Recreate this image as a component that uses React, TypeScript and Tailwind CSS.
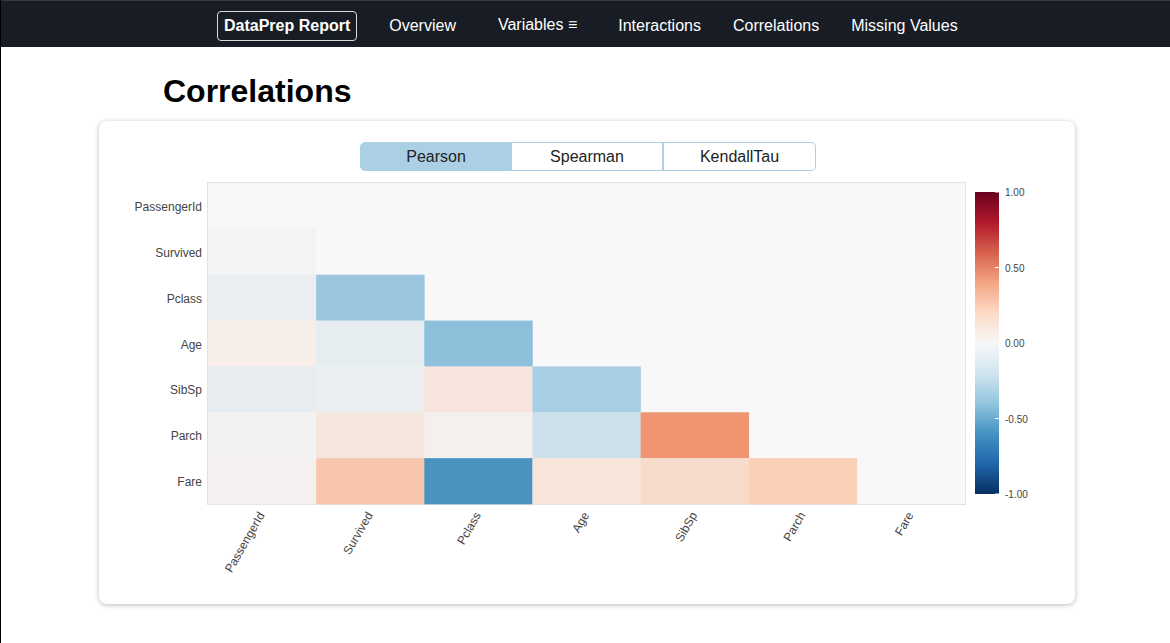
import React from "react";

const labels = ["PassengerId", "Survived", "Pclass", "Age", "SibSp", "Parch", "Fare"];

const cells: [number, number, string][] = [
  [1, 0, "#f3f3f3"],
  [2, 0, "#eaeef1"], [2, 1, "#9ac6df"],
  [3, 0, "#f7eeea"], [3, 1, "#e6edf1"], [3, 2, "#8ec0db"],
  [4, 0, "#e7ecf0"], [4, 1, "#ebeff1"], [4, 2, "#f7e4dc"], [4, 3, "#a8cfe3"],
  [5, 0, "#f2f2f2"], [5, 1, "#f7e6de"], [5, 2, "#f4f0ed"], [5, 3, "#cce1ec"], [5, 4, "#ef9572"],
  [6, 0, "#f5f1f1"], [6, 1, "#f8c6ac"], [6, 2, "#4a93c1"], [6, 3, "#f7e5da"], [6, 4, "#f7dccc"], [6, 5, "#fbd0b8"],
];

const PX = 109;
const PY = 12;
const PW = 757;
const PH = 321;
const CW = PW / 7;
const RH = PH / 7;

function Heatmap() {
  const cbTop = 21;
  const cbBot = 323;
  const ticks = [
    { v: "1.00", y: cbTop },
    { v: "0.50", y: cbTop + (cbBot - cbTop) * 0.25 },
    { v: "0.00", y: cbTop + (cbBot - cbTop) * 0.5 },
    { v: "-0.50", y: cbTop + (cbBot - cbTop) * 0.75 },
    { v: "-1.00", y: cbBot },
  ];
  return (
    <svg width={976} height={433} className="block" style={{ fontFamily: '"Liberation Sans", Arial, sans-serif' }}>
      <defs>
        <linearGradient id="rdbu" x1="0" y1="0" x2="0" y2="1">
          <stop offset="0" stopColor="#67001f" />
          <stop offset="0.1" stopColor="#b2182b" />
          <stop offset="0.2" stopColor="#d6604d" />
          <stop offset="0.3" stopColor="#f4a582" />
          <stop offset="0.4" stopColor="#fddbc7" />
          <stop offset="0.5" stopColor="#f7f7f7" />
          <stop offset="0.6" stopColor="#d1e5f0" />
          <stop offset="0.7" stopColor="#92c5de" />
          <stop offset="0.8" stopColor="#4393c3" />
          <stop offset="0.9" stopColor="#2166ac" />
          <stop offset="1" stopColor="#053061" />
        </linearGradient>
      </defs>
      <rect x={PX - 0.5} y={PY - 0.5} width={PW + 1} height={PH + 1} fill="#f8f8f8" stroke="#e2e2e2" strokeWidth={1} />
      {cells.map(([r, c, col]) => (
        <rect key={`${r}-${c}`} x={PX + c * CW} y={PY + r * RH} width={CW + 0.3} height={RH + 0.3} fill={col} />
      ))}
      {labels.map((l, i) => (
        <text key={l} x={103} y={PY + (i + 0.5) * RH + 5} textAnchor="end" fontSize={12} fill="#444">
          {l}
        </text>
      ))}
      {labels.map((l, i) => {
        const cx = PX + (i + 0.5) * CW + 3;
        return (
          <text key={"x" + l} transform={`translate(${cx},${344}) rotate(-60)`} textAnchor="end" fontSize={12} fill="#444">
            {l}
          </text>
        );
      })}
      <rect x={876} y={cbTop} width={24} height={cbBot - cbTop} fill="url(#rdbu)" />
      {ticks.map((t) => (
        <g key={t.v}>
          <line x1={896} x2={900} y1={t.y} y2={t.y} stroke="#fff" strokeWidth={1} />
          <text x={906} y={t.y + 4} fontSize={10} fill="#444">
            {t.v}
          </text>
        </g>
      ))}
    </svg>
  );
}

export default function App() {
  return (
    <div
      className="min-h-[643px] bg-white border-l border-black"
      style={{ fontFamily: '"Liberation Sans", Arial, Helvetica, sans-serif' }}
    >
      <nav className="h-[47px] bg-[#181d25] border-t border-[#3a3a3a] flex items-center pt-[3px] pl-[216px] text-white text-[16px]">
        <span className="border border-[#d8d8d8] rounded-[4px] px-[6px] h-[30px] flex items-center font-bold">
          DataPrep Report
        </span>
        <span className="ml-[32px]">Overview</span>
        <span className="ml-[42px] -mt-[2px]">Variables ≡</span>
        <span className="ml-[41px]">Interactions</span>
        <span className="ml-[32px]">Correlations</span>
        <span className="ml-[32px]">Missing Values</span>
      </nav>
      <h1 className="ml-[162px] mt-[25px] text-[32px] leading-[38px] font-bold text-black">Correlations</h1>
      <div className="ml-[98px] mt-[11px] w-[976px] h-[483px] rounded-lg bg-white shadow-[0_1px_5px_rgba(0,0,0,0.28)] pt-[21px] flex flex-col items-center">
        <div className="flex text-[16px] text-[#222] ml-[2px]">
          <div className="w-[152px] h-[29px] flex items-center justify-center bg-[#abd0e6] border border-[#abd0e6] rounded-l-[5px]">
            Pearson
          </div>
          <div className="w-[152px] h-[29px] flex items-center justify-center border-y border-r-2 border-[#abd0e6]">
            Spearman
          </div>
          <div className="w-[152px] h-[29px] flex items-center justify-center border-y border-r border-[#abd0e6] rounded-r-[5px]">
            KendallTau
          </div>
        </div>
        <Heatmap />
      </div>
    </div>
  );
}
